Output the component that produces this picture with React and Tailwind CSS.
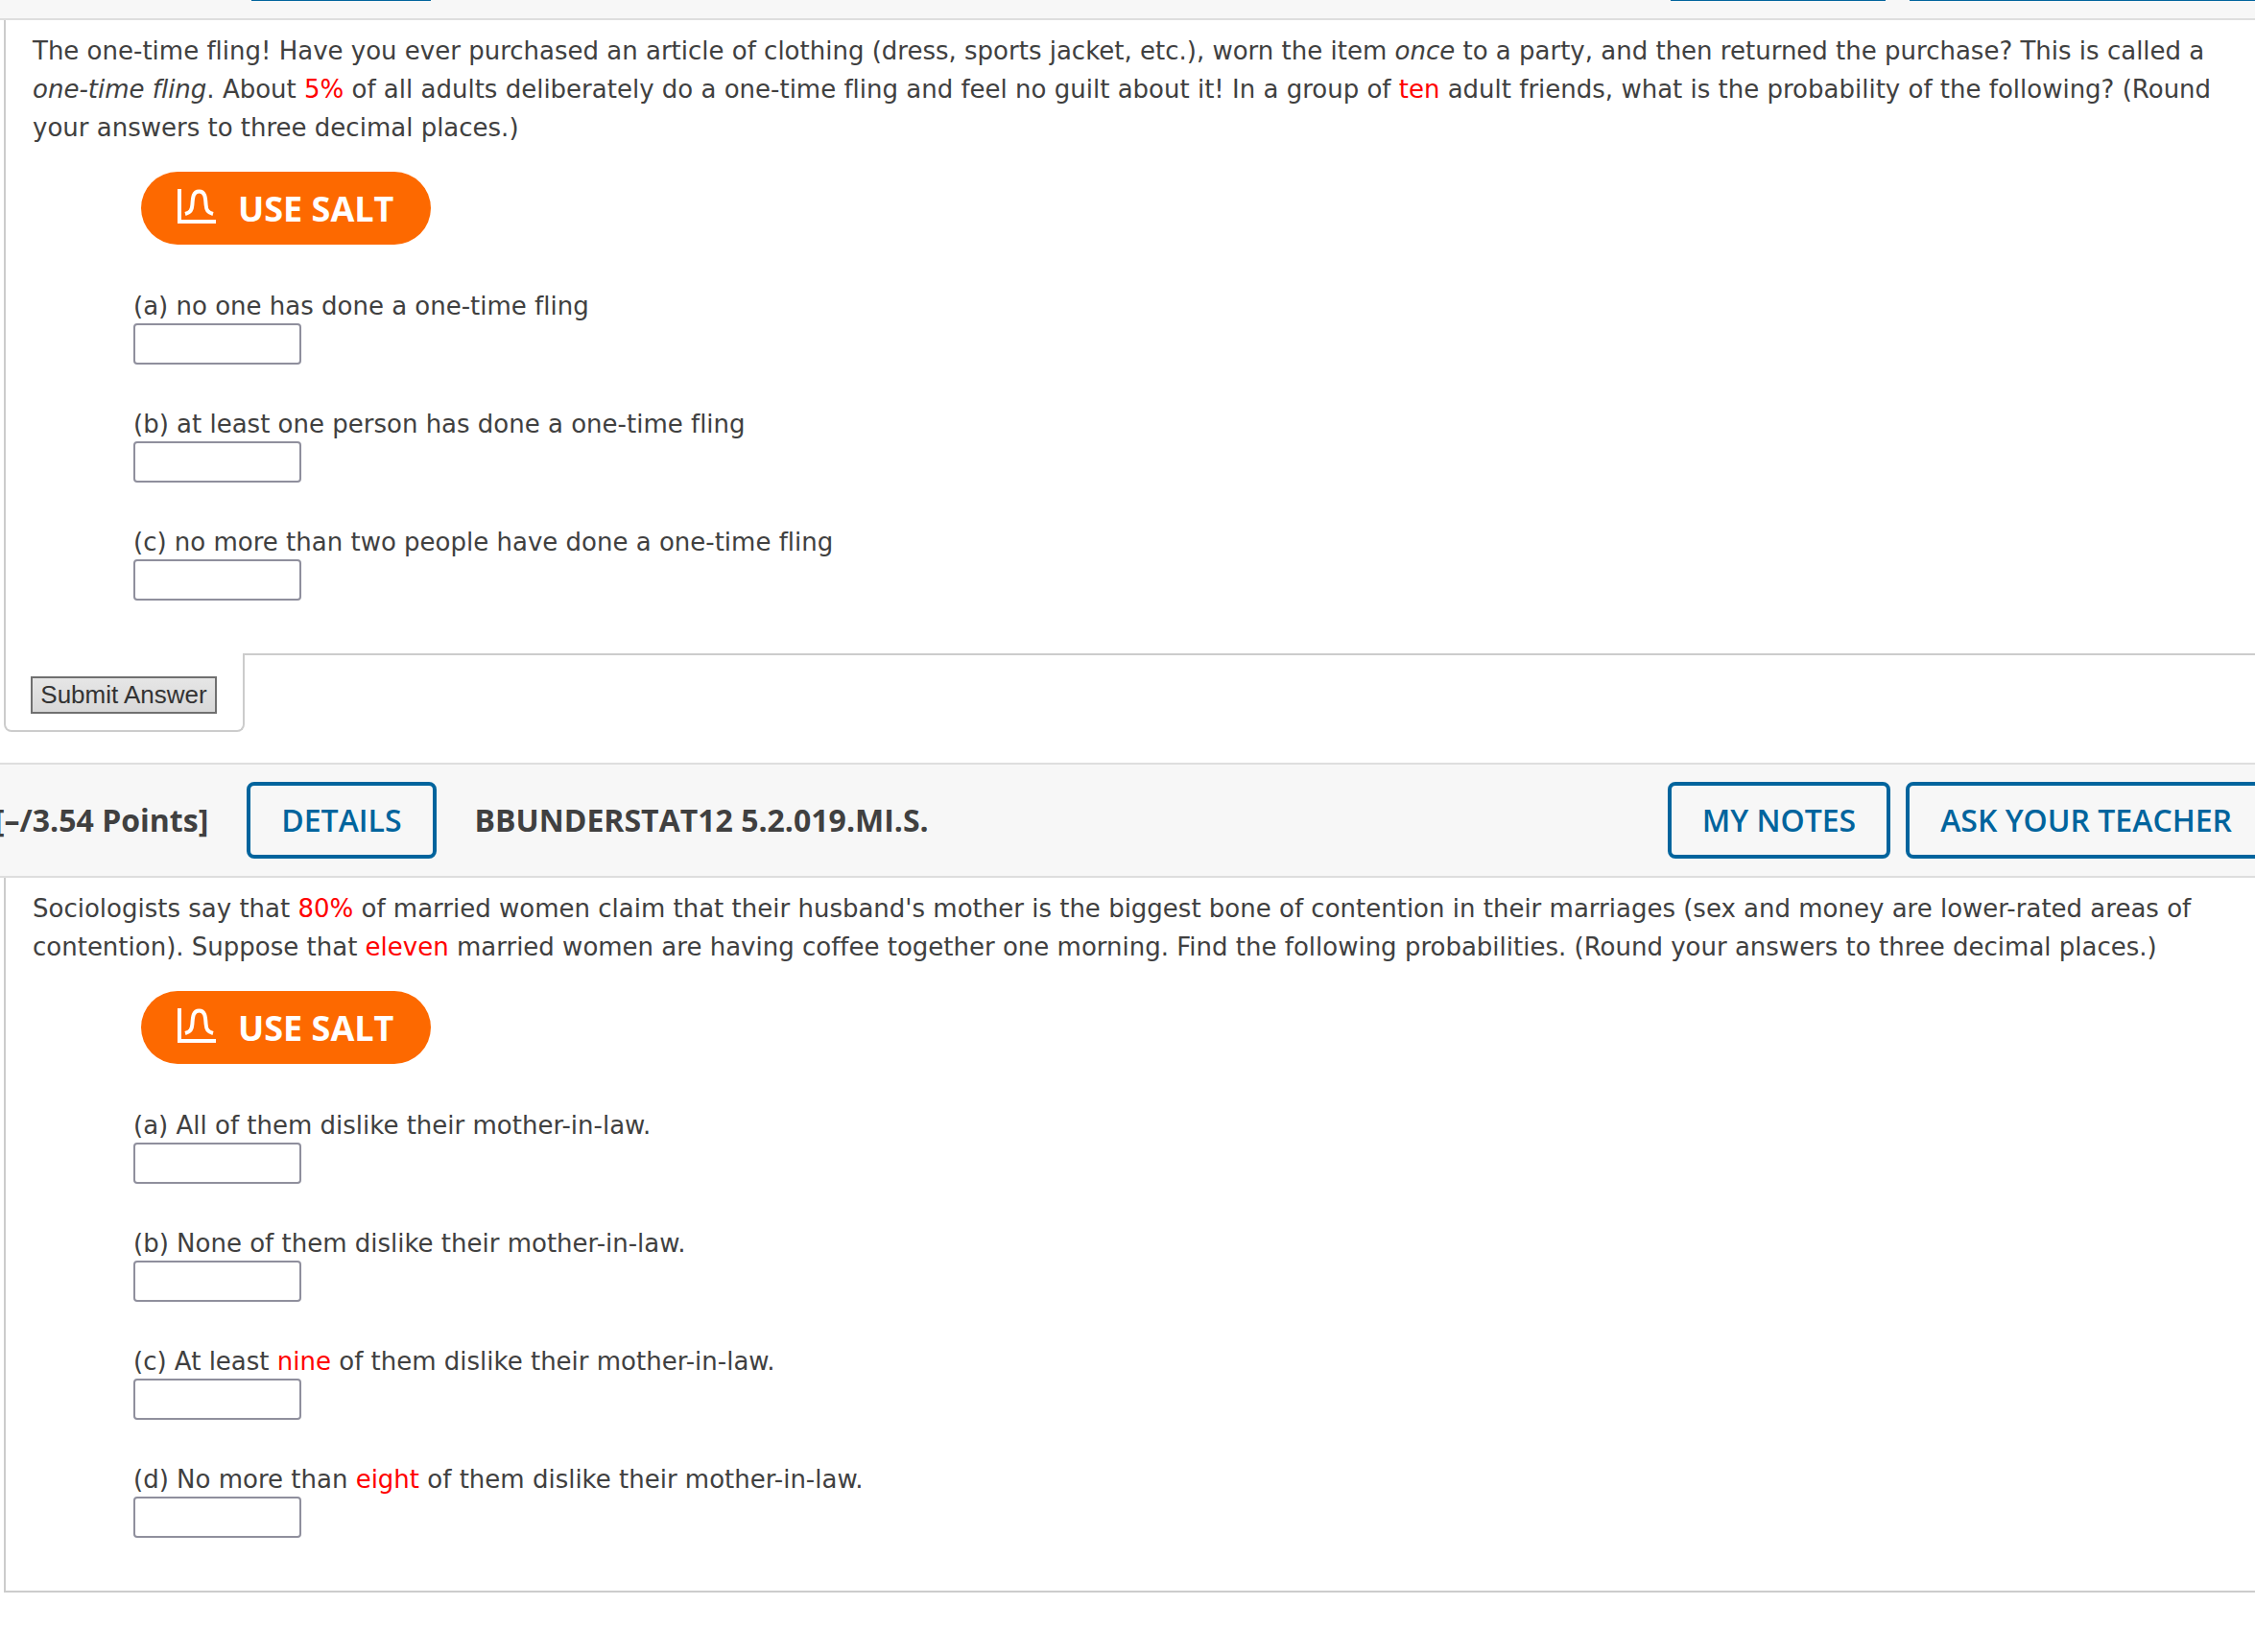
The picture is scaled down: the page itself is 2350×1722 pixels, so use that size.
import { useId } from "react";

const Red = ({ children }) => <span className="text-[#ff0000]">{children}</span>;

const fling = [
  "(a) no one has done a one-time fling",
  "(b) at least one person has done a one-time fling",
  "(c) no more than two people have done a one-time fling",
];

const inLaws = [
  "(a) All of them dislike their mother-in-law.",
  "(b) None of them dislike their mother-in-law.",
  <>(c) At least <Red>nine</Red> of them dislike their mother-in-law.</>,
  <>(d) No more than <Red>eight</Red> of them dislike their mother-in-law.</>,
];

function SaltButton() {
  return (
    <button
      type="button"
      className="ml-[141px] mt-[26px] flex h-[76px] w-[302px] items-center rounded-full bg-[#fd6900] pl-[37px] pt-0.5 font-['Open_Sans',sans-serif] text-[36px] font-bold leading-10 text-white"
    >
      <svg viewBox="0 0 42 38" className="mr-[22px] mb-1.5 h-[38px] w-[42px]" fill="none" stroke="currentColor" strokeWidth="4">
        <path d="M3 1v34h38" />
        <path d="M9 27c5.500-1.500 7-4 7.400-9.500.5-8 1-14 7.100-14s6.600 6 7.100 14c.4 5.500 1.900 8 7.400 9.500" />
      </svg>
      USE SALT
    </button>
  );
}

function Part({ label }) {
  const id = useId();
  return (
    <div className="flex flex-col items-start">
      <label htmlFor={id} className="leading-9">{label}</label>
      <input id={id} type="text" className="h-[43px] w-[175px] rounded-[4px] border-2 border-[#8f8f9d] bg-white px-2 text-2xl" />
    </div>
  );
}

function Question({ children, parts }) {
  return (
    <>
      <p className="pl-7 pr-3 pt-3">{children}</p>
      <SaltButton />
      <div className="mt-[46px] flex flex-col gap-11 pb-[55px] pl-[133px]">
        {parts.map((label, i) => (
          <Part key={i} label={label} />
        ))}
      </div>
    </>
  );
}

function HeaderButton({ children }) {
  return (
    <button type="button" className="h-20 rounded-lg border-4 border-[#00649d] px-8 text-[32px] font-semibold text-[#00649d]">
      {children}
    </button>
  );
}

export default function App() {
  return (
    <div className="min-h-screen overflow-x-hidden bg-white font-[Verdana,'DejaVu_Sans',sans-serif] text-[26px] leading-10 text-[#404040] [font-variant-ligatures:none]">
      {/* Tail end of the previous header */}
      <div className="flex h-[21px] items-start border-b-2 border-[#dedede] bg-[#f7f7f7] pl-[262px]">
        <div className="h-px w-[187px] bg-[#00649d]" />
        <div className="ml-auto h-px w-[224px] bg-[#00649d]" />
        <div className="ml-[25px] h-px w-[360px] bg-[#00649d]" />
      </div>

      <section className="ml-1">
        <div className="border-l-2 border-[#cccccc]">
          <Question parts={fling}>
            The one-time fling! Have you ever purchased an article of clothing (dress, sports jacket, etc.), worn the item{" "}
            <i>once</i> to a party, and then returned the purchase? This is called a <i>one-time fling</i>. About{" "}
            <Red>5%</Red> of all adults deliberately do a one-time fling and feel no guilt about it! In a group of{" "}
            <Red>ten</Red> adult friends, what is the probability of the following? (Round your answers to three decimal
            places.)
          </Question>
        </div>
        <div className="flex">
          <div className="w-[251px] rounded-b-lg border-2 border-t-0 border-[#cccccc] pb-[17px] pl-[26px] pt-6">
            <button
              type="button"
              className="flex h-[39px] w-[194px] items-center justify-center border-2 border-[#707070] bg-linear-to-b from-[#e6e6e6] to-[#d8d8d8] pb-0.5 font-['Liberation_Sans',sans-serif] text-[26px] text-[#333333]"
            >
              Submit Answer
            </button>
          </div>
          <div className="-ml-0.5 flex-1 border-t-2 border-[#cccccc]" />
        </div>
      </section>

      <header className="mt-8 flex items-center border-y-2 border-[#dedede] bg-[#f7f7f7] py-[18px] font-['Open_Sans',sans-serif] text-[32px]">
        <span className="-ml-1.5 mr-10 whitespace-nowrap font-bold">[–/3.54 Points]</span>
        <HeaderButton>DETAILS</HeaderButton>
        <h2 className="ml-10 font-bold">BBUNDERSTAT12 5.2.019.MI.S.</h2>
        <div className="-mr-3 ml-auto flex gap-4 whitespace-nowrap">
          <HeaderButton>MY NOTES</HeaderButton>
          <HeaderButton>ASK YOUR TEACHER</HeaderButton>
        </div>
      </header>

      <section className="ml-1 border-b-2 border-l-2 border-[#cccccc]">
        <Question parts={inLaws}>
          Sociologists say that <Red>80%</Red> of married women claim that their husband's mother is the biggest bone of
          contention in their marriages (sex and money are lower-rated areas of contention). Suppose that{" "}
          <Red>eleven</Red> married women are having coffee together one morning. Find the following probabilities.
          (Round your answers to three decimal places.)
        </Question>
      </section>
    </div>
  );
}
